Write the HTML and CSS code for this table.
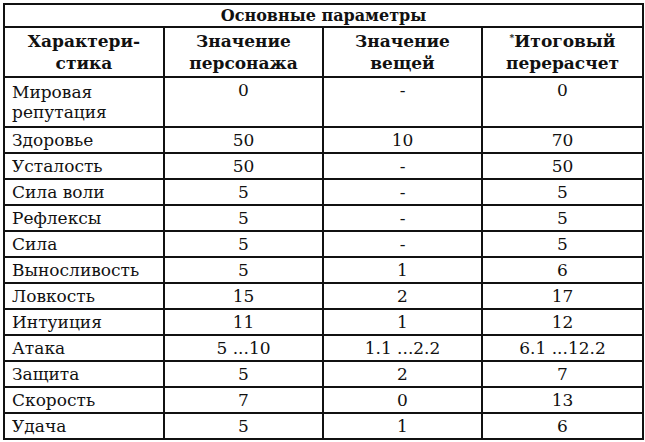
FILE: index.html
```html
<!DOCTYPE html>
<html lang="ru">
<head>
<meta charset="utf-8">
<link rel="stylesheet" href="styles.css">
</head>
<body>
<table class="params">
  <colgroup>
    <col class="c1"><col class="c2"><col class="c3"><col class="c4">
  </colgroup>
  <thead>
    <tr class="title-row"><th colspan="4">Основные параметры</th></tr>
    <tr class="head-row">
      <th>Характери-<br>стика</th>
      <th>Значение<br>персонажа</th>
      <th>Значение<br>вещей</th>
      <th><sup>*</sup>Итоговый<br>перерасчет</th>
    </tr>
  </thead>
  <tbody>
    <tr class="tall"><td class="name">Мировая<br>репутация</td><td class="top">0</td><td class="top">-</td><td class="top">0</td></tr>
    <tr><td class="name">Здоровье</td><td>50</td><td>10</td><td>70</td></tr>
    <tr><td class="name">Усталость</td><td>50</td><td>-</td><td>50</td></tr>
    <tr><td class="name">Сила воли</td><td>5</td><td>-</td><td>5</td></tr>
    <tr><td class="name">Рефлексы</td><td>5</td><td>-</td><td>5</td></tr>
    <tr><td class="name">Сила</td><td>5</td><td>-</td><td>5</td></tr>
    <tr><td class="name">Выносливость</td><td>5</td><td>1</td><td>6</td></tr>
    <tr><td class="name">Ловкость</td><td>15</td><td>2</td><td>17</td></tr>
    <tr><td class="name">Интуиция</td><td>11</td><td>1</td><td>12</td></tr>
    <tr><td class="name">Атака</td><td>5 ...10</td><td>1.1 ...2.2</td><td>6.1 ...12.2</td></tr>
    <tr><td class="name">Защита</td><td>5</td><td>2</td><td>7</td></tr>
    <tr><td class="name">Скорость</td><td>7</td><td>0</td><td>13</td></tr>
    <tr><td class="name">Удача</td><td>5</td><td>1</td><td>6</td></tr>
  </tbody>
</table>
</body>
</html>
```

FILE: styles.css
```css
html, body {
  margin: 0;
  padding: 0;
  background: #ffffff;
}
body {
  padding: 3px 0 0 3px;
  font-family: "DejaVu Serif", "Liberation Serif", serif;
  color: #111;
}
.params {
  border-collapse: collapse;
  width: 639px;
  table-layout: fixed;
  font-size: 17px;
  border: 2px solid #111;
}
.c1 { width: 160px; }
.c2 { width: 159px; }
.c3 { width: 159px; }
.c4 { width: 161px; }
.params th, .params td {
  border: 2px solid #111;
  padding: 0;
  text-align: center;
  vertical-align: middle;
}
.title-row th {
  height: 21px;
  font-weight: bold;
  font-size: 16px;
}
.head-row th {
  height: 48px;
  font-weight: bold;
  font-size: 17px;
  line-height: 22px;
}
.head-row sup {
  font-size: 9px;
  vertical-align: 6px;
  line-height: 0;
}
.params td {
  height: 24px;
  line-height: 20px;
}
.params td.name {
  text-align: left;
  padding-left: 7px;
}
.params tr.tall td {
  height: 46px;
}
.params td.top {
  vertical-align: top;
  padding-top: 2px;
}
```
